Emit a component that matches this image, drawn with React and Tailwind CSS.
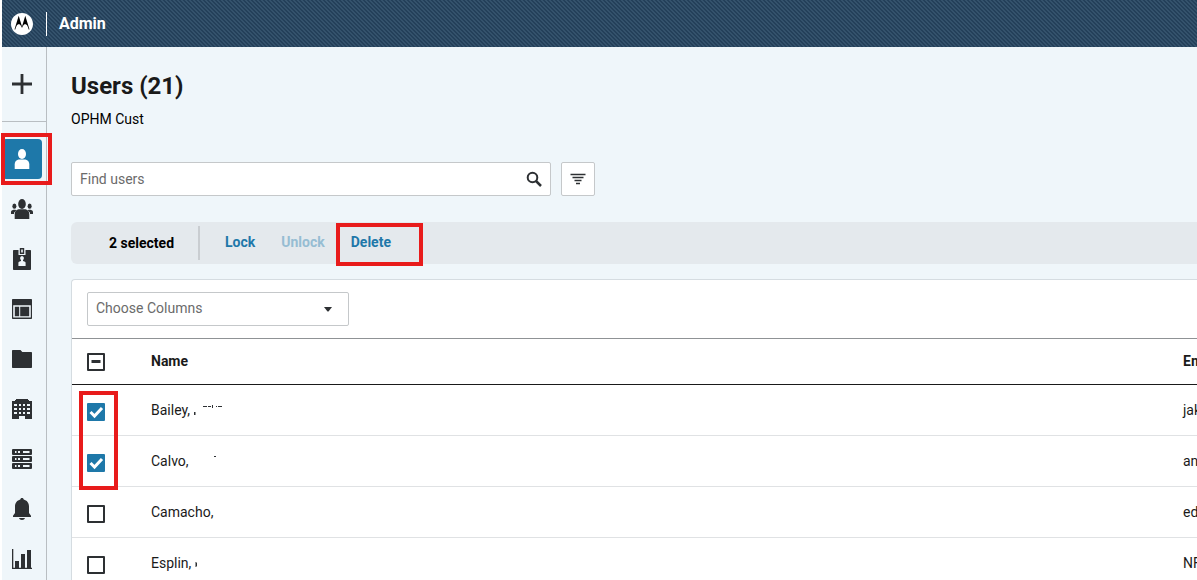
import { useEffect, useRef, useState } from "react";
import { SiMotorola } from "react-icons/si";

const ICON = "#2d3033";

function Svg({ children, className = "h-6 w-6", viewBox = "0 0 24 24" }) {
  return (
    <svg className={className} viewBox={viewBox} fill="currentColor" aria-hidden="true">
      {children}
    </svg>
  );
}

/* Navigation icons, drawn on a 24 unit grid */
const UserIcon = () => (
  <Svg>
    <ellipse cx="12" cy="7" rx="4" ry="5" />
    <path d="M8.5 12.4h7c2.600.9 3.800 2.300 3.800 5V22H4.700v-4.600c0-2.700 1.200-4.100 3.800-5z" />
  </Svg>
);

const UsersIcon = () => (
  <Svg>
    <ellipse cx="12" cy="7" rx="3.8" ry="5" />
    <path d="M8.5 12.2h7c2.600.9 3.800 2.300 3.800 5V22H4.700v-4.800c0-2.700 1.200-4.100 3.800-5z" />
    <ellipse cx="4.400" cy="9.200" rx="2" ry="2.600" />
    <ellipse cx="19.600" cy="9.200" rx="2" ry="2.600" />
    <path d="M1 17v-1.800c0-.9.5-1.600 1.300-1.900l1.200-.5h1.800l1 .5L4 15.800V17zM23 17v-1.800c0-.9-.5-1.600-1.300-1.900l-1.200-.5h-1.800l-1 .5 2.300 2.500V17z" />
  </Svg>
);

const BadgeIcon = () => (
  <Svg>
    <path
      fillRule="evenodd"
      d="M4 3h4.500v5h7V3H20c.6 0 1 .4 1 1v18c0 .6-.4 1-1 1H4c-.6 0-1-.4-1-1V4c0-.6.4-1 1-1zM12 9a2 2.200 0 0 0-1 4v1l-2 .8c-.4.2-.6.600-.6 1V19h7.200v-3.200c0-.4-.2-.8-.6-1L13 14v-1a2 2.200 0 0 0-1-4z"
    />
    <path fillRule="evenodd" d="M9.800 1h4.400v6H9.800zM11.200 2.400v3.200h1.600V2.400z" />
  </Svg>
);

const LayoutIcon = () => (
  <Svg>
    <path
      fillRule="evenodd"
      d="M3 2h18c.6 0 1 .4 1 1v18c0 .6-.4 1-1 1H3c-.6 0-1-.4-1-1V3c0-.6.4-1 1-1zM3.200 8.300v12.200h17.600V8.300z"
    />
    <path d="M4.800 9.800h4.400v9.400H4.800zM10.200 9.800h9v9.400h-9z" />
  </Svg>
);

const FolderIcon = () => (
  <Svg>
    <path d="M3 3h7.500l1.800 2H21c.6 0 1 .4 1 1v14c0 .6-.4 1-1 1H3c-.6 0-1-.4-1-1V4c0-.6.4-1 1-1z" />
  </Svg>
);

const BuildingIcon = () => (
  <Svg>
    <path
      fillRule="evenodd"
      d="M6 2h12v1h1v1h3v18h-7v-3H9v3H2V4h3V3h1zM4 7v2h3V7zM9 7v2h2V7zM13 7v2h2V7zM17 7v2h3V7zM4 11v2h3v-2zM9 11v2h2v-2zM13 11v2h2v-2zM17 11v2h3v-2zM4 15v2h3v-2zM9 15v2h2v-2zM13 15v2h2v-2zM17 15v2h3v-2z"
    />
  </Svg>
);

const ServersIcon = () => (
  <Svg>
    {[2, 9, 16].map((y) => (
      <g key={y}>
        <rect x="2" y={y} width="20" height="6" rx="1" />
        <g fill="#eff6fa">
          <rect x="5" y={y + 2} width="1.500" height="2" />
          <rect x="8" y={y + 2} width="2" height="2" />
          <rect x="13" y={y + 2} width="6.500" height="2" />
        </g>
      </g>
    ))}
  </Svg>
);

const BellIcon = () => (
  <Svg>
    <path d="M12 1c1 0 1.700.7 1.700 1.600 3.200.8 5.300 3.400 5.300 6.900v6.500l2 2.800V20H3v-1.200L5 16V9.500c0-3.500 2.100-6.100 5.300-6.900C10.300 1.700 11 1 12 1zM9 21h6c-.3 1.200-1.500 2-3 2s-2.700-.8-3-2z" />
  </Svg>
);

const ChartIcon = () => (
  <Svg>
    <path d="M2 2h1.300v18.700H22V22H2z" />
    <path d="M5 14h4v7H5zM11 7h4v14h-4zM17 3h4v18h-4z" />
  </Svg>
);

const NAV = [
  { label: "Users", Icon: UserIcon, active: true },
  { label: "Groups", Icon: UsersIcon },
  { label: "Badges", Icon: BadgeIcon },
  { label: "Layouts", Icon: LayoutIcon },
  { label: "Folders", Icon: FolderIcon },
  { label: "Agencies", Icon: BuildingIcon },
  { label: "Servers", Icon: ServersIcon },
  { label: "Alerts", Icon: BellIcon },
  { label: "Reports", Icon: ChartIcon },
];

const ROWS = [
  { name: "Bailey,", email: "jak", marks: "M0 9h1.500v3H0zM9 3h4v1H9zM14 3h3v1h-3zM18 2h1v3h-1zM22 3h1v1h-1zM24 3h4v1h-4z" },
  { name: "Calvo,", email: "an", marks: "M21 2h2v1h-2z" },
  { name: "Camacho,", email: "ed", marks: "" },
  { name: "Esplin,", email: "NF", marks: "M.5 6h1v1h.5v3h-.5v1h-1z" },
];

function Highlight({ className }) {
  return (
    <span
      aria-hidden="true"
      className={`pointer-events-none absolute z-10 border-4 border-[#e81b1b] ${className}`}
    />
  );
}

function Checkbox({ label, checked, indeterminate = false, onChange }) {
  const ref = useRef(null);
  useEffect(() => {
    ref.current.indeterminate = indeterminate;
  }, [indeterminate]);
  return (
    <span className="relative block h-[18px] w-[18px]">
      <input
        ref={ref}
        type="checkbox"
        aria-label={label}
        checked={checked}
        onChange={onChange}
        className="block h-[18px] w-[18px] appearance-none rounded-[1px] border-2 border-[#2d3033] bg-white checked:border-[#1e78a9] checked:bg-[#1e78a9]"
      />
      {(checked || indeterminate) && (
        <svg viewBox="0 0 18 18" className="pointer-events-none absolute inset-0 h-[18px] w-[18px]" fill="none">
          {indeterminate ? (
            <path d="M4.500 8.500h9" stroke={ICON} strokeWidth="3" />
          ) : (
            <path d="M3.500 9l4 4 7.500-8" stroke="#fff" strokeWidth="3" />
          )}
        </svg>
      )}
    </span>
  );
}

function Header() {
  return (
    <header className="flex h-[47px] shrink-0 items-center bg-[#27435c] bg-[linear-gradient(45deg,#24405a_25%,#34526c_25%,#34526c_50%,#24405a_50%,#24405a_75%,#34526c_75%)] bg-[length:4px_4px] pl-[9px] text-white">
      <span className="flex h-[22px] w-[22px] rounded-full bg-[radial-gradient(circle,#000_9px,transparent_10px)]">
        <SiMotorola className="h-[22px] w-[22px]" role="img" aria-label="Motorola" />
      </span>
      <h2 className="ml-[13px] flex h-6 items-center border-l border-white pl-3 text-base leading-6 font-bold">Admin</h2>
    </header>
  );
}

function Sidebar() {
  return (
    <aside className="w-[45px] shrink-0 border-r border-[#b9bec2] text-[#2d3033]">
      <div className="h-[75px] border-b border-[#b9bec2]">
        <button type="button" aria-label="Add" className="flex h-[74px] w-10 items-center justify-center">
          <Svg>
            <path d="M10.600 2h2.800v8.600H22v2.800h-8.600V22h-2.800v-8.600H2v-2.800h8.600z" />
          </Svg>
        </button>
      </div>
      <nav className="flex flex-col gap-[10px] pt-[17px]">
        {NAV.map(({ label, Icon, active }) => (
          <div key={label} className="relative w-10">
            <a
              href="#"
              aria-label={label}
              className={`flex h-10 w-10 items-center justify-center ${active ? "rounded-sm bg-[#1e78a9] text-white" : ""}`}
            >
              <Icon />
            </a>
            {active && <Highlight className="-top-[6px] -left-px h-[52px] w-[51px]" />}
          </div>
        ))}
      </nav>
    </aside>
  );
}

function Toolbar({ count }) {
  return (
    <div className="mt-[26px] flex h-[42px] items-center rounded-l-md bg-[#e4e9ed] pl-[38px] text-sm leading-5 font-bold">
      <span className="text-black">{count} selected</span>
      <span className="mr-[25px] ml-6 h-[34px] w-[2px] bg-[#c9cdd1]" />
      <div className="flex items-center gap-[26px] pb-[2px] text-[#1e78a9]">
        <button type="button">Lock</button>
        <button type="button" disabled className="text-[#96bdd3]">
          Unlock
        </button>
        <span className="relative">
          <button type="button">Delete</button>
          <Highlight className="-top-[9px] -left-[15px] h-[43px] w-[87px]" />
        </span>
      </div>
    </div>
  );
}

function UsersTable({ selected, toggle, toggleAll }) {
  const cell = "h-[51px] border-b border-[#e0e2e4] p-0";
  const head = "h-[47px] border-y border-t-[#8f9295] border-b-[#1a1a1a] text-left font-bold";
  return (
    <section className="relative mt-[15px] min-h-0 flex-1 rounded-tl-sm border-t border-l border-[#d5dce1] bg-white">
      <div className="relative mt-3 ml-[15px] w-[262px]">
        <select
          aria-label="Choose Columns"
          defaultValue=""
          className="block h-[34px] w-full appearance-none rounded-[2px] border border-[#c5c8ca] bg-white px-2 pb-[2px] text-sm text-[#6b6b6b]"
        >
          <option value="">Choose Columns</option>
          <option>Name</option>
          <option>Email</option>
        </select>
        <svg viewBox="0 0 8 5" className="pointer-events-none absolute top-[15px] right-[17px] h-[5px] w-2" fill={ICON}>
          <path d="M0 0h8L4.500 4.500h-1z" />
        </svg>
      </div>
      <div className="mt-3 overflow-hidden">
        <table className="w-[1600px] table-fixed border-separate border-spacing-0 text-sm leading-5 text-[#1a1a1a]">
          <colgroup>
            <col className="w-[79px]" />
            <col className="w-[1032px]" />
            <col />
          </colgroup>
          <thead>
            <tr>
              <th className={`${head} p-0 pl-[15px]`}>
                <Checkbox
                  label="Select all users"
                  checked={selected.length === ROWS.length}
                  indeterminate={selected.length > 0 && selected.length < ROWS.length}
                  onChange={toggleAll}
                />
              </th>
              <th className={`${head} p-0 pb-[2px]`}>Name</th>
              <th className={`${head} p-0 pb-[2px]`}>Email</th>
            </tr>
          </thead>
          <tbody>
            {ROWS.map(({ name, email, marks }, i) => (
              <tr key={name}>
                <td className={`${cell} pt-1 pl-[15px]`}>
                  <Checkbox label={`Select ${name}`} checked={selected.includes(i)} onChange={() => toggle(i)} />
                </td>
                <td className={cell}>
                  <span className="flex items-center gap-1">
                    {name}
                    <svg viewBox="0 0 40 14" className="h-[14px] w-10" fill={ICON} aria-hidden="true">
                      <path d={marks} />
                    </svg>
                  </span>
                </td>
                <td className={cell}>{email}</td>
              </tr>
            ))}
          </tbody>
        </table>
      </div>
      <Highlight className="top-[111px] left-[7px] h-[99px] w-[39px]" />
    </section>
  );
}

export default function App() {
  const [selected, setSelected] = useState([0, 1]);
  const toggle = (i) =>
    setSelected((s) => (s.includes(i) ? s.filter((n) => n !== i) : [...s, i]));
  const toggleAll = () =>
    setSelected((s) => (s.length === ROWS.length ? [] : ROWS.map((_, i) => i)));

  return (
    <div className="flex h-screen flex-col overflow-hidden bg-white pl-[2px] font-[Roboto,sans-serif] text-[#1a1a1a]">
      <Header />
      <div className="flex min-h-0 flex-1 bg-[#eff6fa]">
        <Sidebar />
        <main className="flex min-w-0 flex-1 flex-col pt-6 pl-6">
          <h1 className="text-2xl leading-[30px] font-bold">Users (21)</h1>
          <p className="mt-2 text-sm leading-5 text-black">OPHM Cust</p>
          <form className="mt-[33px] flex gap-[10px]" onSubmit={(e) => e.preventDefault()}>
            <div className="relative w-[480px]">
              <input
                type="search"
                aria-label="Find users"
                placeholder="Find users"
                className="block h-[34px] w-full rounded-[2px] border border-[#c5c8ca] bg-white pr-10 pl-2 text-sm placeholder:text-[#6b6b6b]"
              />
              <button type="submit" aria-label="Search" className="absolute top-[9px] right-[9px]">
                <svg viewBox="0 0 16 16" className="h-4 w-4" fill="none" stroke={ICON} strokeWidth="2" aria-hidden="true">
                  <circle cx="6.500" cy="6.500" r="4.800" />
                  <path d="M10 10l5 5" strokeWidth="2.500" />
                </svg>
              </button>
            </div>
            <button
              type="button"
              aria-label="Filter"
              className="flex h-[34px] w-[34px] items-center justify-center rounded-[2px] border border-[#c5c8ca] bg-white"
            >
              <svg viewBox="0 0 16 12" className="h-3 w-4" stroke={ICON} strokeWidth="1.500" aria-hidden="true">
                <path d="M.5 1.500h15M2.500 4.500h11M4.500 7.500h7M6 10.500h4" />
              </svg>
            </button>
          </form>
          <Toolbar count={selected.length} />
          <UsersTable selected={selected} toggle={toggle} toggleAll={toggleAll} />
        </main>
      </div>
    </div>
  );
}
